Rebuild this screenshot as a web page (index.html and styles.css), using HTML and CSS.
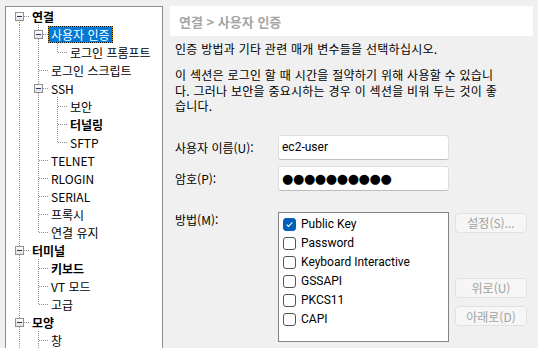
FILE: index.html
```html
<!DOCTYPE html>
<html lang="ko">
<head>
    <meta charset="UTF-8">
    <title>세션 속성 - 사용자 인증</title>
    <link rel="stylesheet" href="styles.css">
</head>
<body>
    <div class="window">

        <!-- Category tree -->
        <div class="tree">
            <div class="row"><span class="g f"><span class="exp"></span></span><span class="lbl bold">연결</span></div>
            <div class="row"><span class="g v"></span><span class="g t"><span class="exp"></span></span><span class="lbl selected">사용자 인증</span></div>
            <div class="row"><span class="g v"></span><span class="g v"></span><span class="g l"></span><span class="lbl">로그인 프롬프트</span></div>
            <div class="row"><span class="g v"></span><span class="g t"></span><span class="lbl">로그인 스크립트</span></div>
            <div class="row"><span class="g v"></span><span class="g t"><span class="exp"></span></span><span class="lbl">SSH</span></div>
            <div class="row"><span class="g v"></span><span class="g v"></span><span class="g t"></span><span class="lbl">보안</span></div>
            <div class="row"><span class="g v"></span><span class="g v"></span><span class="g t"></span><span class="lbl bold">터널링</span></div>
            <div class="row"><span class="g v"></span><span class="g v"></span><span class="g l"></span><span class="lbl">SFTP</span></div>
            <div class="row"><span class="g v"></span><span class="g t"></span><span class="lbl">TELNET</span></div>
            <div class="row"><span class="g v"></span><span class="g t"></span><span class="lbl">RLOGIN</span></div>
            <div class="row"><span class="g v"></span><span class="g t"></span><span class="lbl">SERIAL</span></div>
            <div class="row"><span class="g v"></span><span class="g t"></span><span class="lbl">프록시</span></div>
            <div class="row"><span class="g v"></span><span class="g l"></span><span class="lbl">연결 유지</span></div>
            <div class="row"><span class="g t"><span class="exp"></span></span><span class="lbl bold">터미널</span></div>
            <div class="row"><span class="g v"></span><span class="g t"></span><span class="lbl bold">키보드</span></div>
            <div class="row"><span class="g v"></span><span class="g t"></span><span class="lbl">VT 모드</span></div>
            <div class="row"><span class="g v"></span><span class="g l"></span><span class="lbl">고급</span></div>
            <div class="row"><span class="g t"><span class="exp"></span></span><span class="lbl bold">모양</span></div>
            <div class="row"><span class="g v"></span><span class="g t"></span><span class="lbl">창</span></div>
        </div>

        <!-- Settings page -->
        <div class="panel">
            <div class="crumb">연결 &gt; 사용자 인증</div>
            <p class="intro first">인증 방법과 기타 관련 매개 변수들을 선택하십시오.</p>
            <p class="intro second">이 섹션은 로그인 할 때 시간을 절약하기 위해 사용할 수 있습니<br>다. 그러나 보안을 중요시하는 경우 이 섹션을 비워 두는 것이 좋<br>습니다.</p>

            <div class="form">
                <label class="field-label" for="user">사용자 이름(U):</label>
                <input class="text-box" id="user" type="text" value="ec2-user">
                <span></span>

                <label class="field-label" for="pass">암호(P):</label>
                <div class="text-box secret" id="pass">●●●●●●●●●●</div>
                <span></span>

                <label class="field-label top">방법(M):</label>
                <div class="list">
                    <div class="item"><span class="cb on"><svg width="11" height="11" viewBox="0 0 11 11"><path d="M2.6 5.6 L4.5 7.4 L8.4 3.4" fill="none" stroke="#fff" stroke-width="1.1"/></svg></span>Public Key</div>
                    <div class="item"><span class="cb"></span>Password</div>
                    <div class="item"><span class="cb"></span>Keyboard Interactive</div>
                    <div class="item"><span class="cb"></span>GSSAPI</div>
                    <div class="item"><span class="cb"></span>PKCS11</div>
                    <div class="item"><span class="cb"></span>CAPI</div>
                </div>
                <div class="buttons">
                    <button class="btn" disabled>설정(S)...</button>
                    <button class="btn up" disabled>위로(U)</button>
                    <button class="btn down" disabled>아래로(D)</button>
                </div>
            </div>
        </div>
    </div>
</body>
</html>
```

FILE: styles.css
```css
:root {
    --dv: repeating-linear-gradient(to bottom, #8e8e8e 0 1px, transparent 1px 2px);
    --dh: repeating-linear-gradient(to right, #8e8e8e 0 1px, transparent 1px 2px);
}
body {
    margin: 0;
    height: 348px;
    overflow: hidden;
    background: #f0f0f0;
    color: #000;
    font-family: "Noto Sans CJK KR", sans-serif;
    font-size: 12px;
}
.window {
    display: flex;
    gap: 7px;
    padding: 6px 0 0 5px;
}

/* Tree */
.tree {
    box-sizing: border-box;
    width: 158px;
    height: 342px;
    padding: 0 0 0 4px;
    border: 1px solid #8c9096;
    border-bottom: none;
    background: #fff;
    overflow: hidden;
}
.row {
    display: flex;
    align-items: center;
    height: 18px;
}
.g {
    flex: none;
    width: 19px;
    height: 18px;
    display: flex;
    align-items: center;
    justify-content: center;
    background-repeat: no-repeat;
}
.v {
    background-image: var(--dv);
    background-position: 9px 0;
    background-size: 1px 18px;
}
.t {
    background-image: var(--dv), var(--dh);
    background-position: 9px 0, 10px 9px;
    background-size: 1px 18px, 9px 1px;
}
.l {
    background-image: var(--dv), var(--dh);
    background-position: 9px 0, 10px 9px;
    background-size: 1px 10px, 9px 1px;
}
.f {
    background-image: var(--dv), var(--dh);
    background-position: 9px 9px, 10px 9px;
    background-size: 1px 9px, 9px 1px;
}
.exp {
    width: 9px;
    height: 9px;
    box-sizing: border-box;
    border: 1px solid #929292;
    background: linear-gradient(#ffffff, #e2e2e2);
    display: flex;
    align-items: center;
    justify-content: center;
}
.exp::after {
    content: "";
    width: 5px;
    height: 1px;
    background: #1d3668;
}
.lbl {
    padding: 0 3px;
    line-height: 17px;
    white-space: nowrap;
}
.lbl.bold {
    font-weight: bold;
}
.lbl.selected {
    padding: 0 2px;
    border: 1px dotted #111;
    line-height: 15px;
    color: #fff;
    background: linear-gradient(#0078d7, #0078d7) padding-box, #e89b00;
}

/* Right panel */
.panel {
    width: 363px;
}
.crumb {
    height: 30px;
    padding-left: 9px;
    display: flex;
    align-items: center;
    background: #fff;
    color: #a5a5a5;
    font-size: 13px;
    font-weight: bold;
}
.intro {
    margin: 0;
    padding-left: 5px;
    white-space: nowrap;
    letter-spacing: 0.25px;
}
.intro.first {
    margin-top: 5px;
    line-height: 16px;
}
.intro.second {
    margin-top: 10px;
    line-height: 15.5px;
}
.form {
    display: grid;
    grid-template-columns: 97px 171px 72px;
    grid-template-rows: 25px 25px 130px;
    column-gap: 6px;
    row-gap: 6px;
    margin-top: 21px;
    padding-left: 5px;
}
.field-label {
    align-self: center;
}
.field-label.top {
    align-self: start;
    margin-top: 14px;
}
.text-box {
    box-sizing: border-box;
    height: 25px;
    margin: 0;
    padding: 0 3px;
    border: 1px solid #dedede;
    border-bottom-color: #bdbdbd;
    border-radius: 3px;
    background: #fff;
    font-family: Roboto, sans-serif;
    font-size: 12px;
    color: #000;
    outline: none;
}
.secret {
    display: flex;
    align-items: center;
    font-family: "DejaVu Sans", sans-serif;
    font-size: 13px;
    letter-spacing: -0.4px;
    overflow: hidden;
}
.list {
    grid-row: 3;
    grid-column: 2;
    margin-top: 15px;
    height: 130px;
    box-sizing: border-box;
    padding: 2px 0 0 4px;
    border: 1px solid #838383;
    background: #fff;
    font-family: Roboto, sans-serif;
}
.item {
    display: flex;
    align-items: center;
    gap: 5px;
    height: 19px;
}
.cb {
    width: 13px;
    height: 13px;
    box-sizing: border-box;
    border: 1px solid #545454;
    border-radius: 3px;
    background: #fff;
    display: flex;
    align-items: center;
    justify-content: center;
}
.cb.on {
    background: #005fb8;
    border-color: #005fb8;
}
.buttons {
    grid-row: 3;
    grid-column: 3;
    margin-top: 16px;
    display: flex;
    flex-direction: column;
}
.btn {
    height: 24px;
    padding: 0;
    border: 1px solid #e2e2e2;
    border-radius: 4px;
    background: #f6f6f6;
    color: #a2a2a2;
    font-family: "Noto Sans CJK KR", sans-serif;
    font-size: 12px;
}
.btn.up {
    margin-top: 45px;
}
.btn.down {
    margin-top: 8px;
}
```
